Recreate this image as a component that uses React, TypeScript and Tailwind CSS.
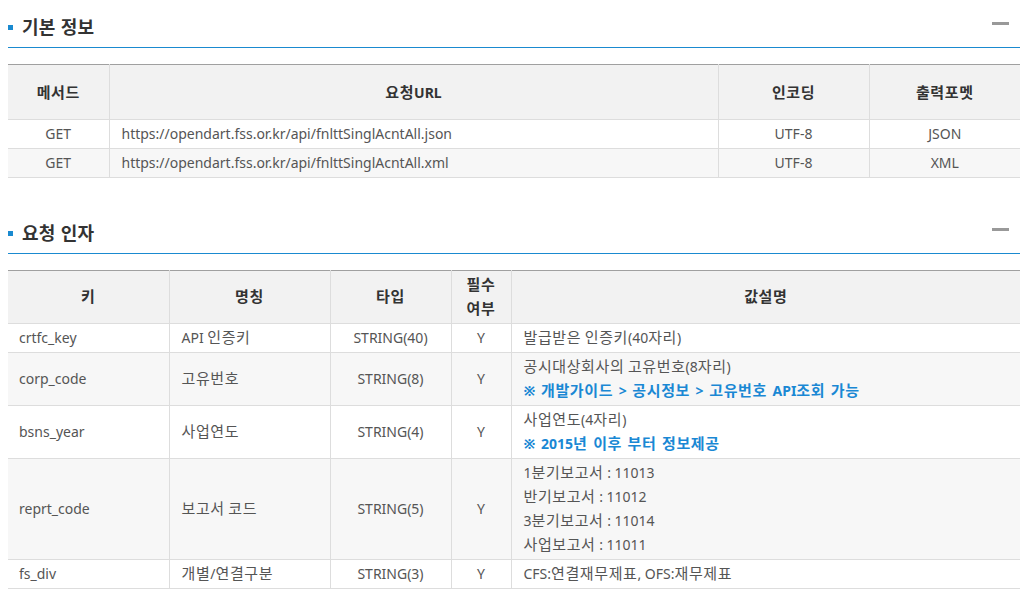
import type { ReactNode } from 'react';

const font = { fontFamily: '"Noto Sans", "Noto Sans CJK KR", sans-serif' };

// Hangul runs get a slightly larger size so they sit as wide as in the original
function K({ children }: { children: string }) {
  const parts = children.split(/([\uAC00-\uD7A3]+)/);
  return (
    <>
      {parts.map((p, i) =>
        i % 2 ? (
          <span key={i} className="text-[15px] leading-none tracking-[0.6px]">
            {p}
          </span>
        ) : (
          p
        ),
      )}
    </>
  );
}

function SectionTitle({ title }: { title: string }) {
  return (
    <div className="flex h-[48px] items-center justify-between border-b border-[#1a8ad0] pt-[7px]">
      <div className="flex items-center gap-[9px]">
        <span className="block size-[5px] bg-[#1a8ad0]" />
        <h2 className="text-[18px] font-bold leading-none tracking-[0.3px] text-[#333]">{title}</h2>
      </div>
      <span className="mr-[11px] mb-[7px] block h-[3px] w-[17px] bg-[#999]" />
    </div>
  );
}

const th = 'border-x border-b border-[#ddd] bg-[#f2f2f2] font-bold text-[#333] first:border-l-0 last:border-r-0';
const td = 'border-x border-b border-[#ddd] py-[2px] leading-6 text-[#555] first:border-l-0 last:border-r-0';

const basicRows = [
  ['GET', 'https://opendart.fss.or.kr/api/fnlttSinglAcntAll.json', 'UTF-8', 'JSON'],
  ['GET', 'https://opendart.fss.or.kr/api/fnlttSinglAcntAll.xml', 'UTF-8', 'XML'],
];

function Note({ children }: { children: string }) {
  return (
    <div className="font-bold text-[#1a88d4] [word-spacing:2px]">
      <K>{children}</K>
    </div>
  );
}

const paramRows: { key: string; name: string; type: string; desc: ReactNode }[] = [
  { key: 'crtfc_key', name: 'API 인증키', type: 'STRING(40)', desc: <K>발급받은 인증키(40자리)</K> },
  {
    key: 'corp_code',
    name: '고유번호',
    type: 'STRING(8)',
    desc: (
      <>
        <div>
          <K>공시대상회사의 고유번호(8자리)</K>
        </div>
        <Note>※ 개발가이드 &gt; 공시정보 &gt; 고유번호 API조회 가능</Note>
      </>
    ),
  },
  {
    key: 'bsns_year',
    name: '사업연도',
    type: 'STRING(4)',
    desc: (
      <>
        <div>
          <K>사업연도(4자리)</K>
        </div>
        <Note>※ 2015년 이후 부터 정보제공</Note>
      </>
    ),
  },
  {
    key: 'reprt_code',
    name: '보고서 코드',
    type: 'STRING(5)',
    desc: (
      <>
        <div>
          <K>1분기보고서 : 11013</K>
        </div>
        <div>
          <K>반기보고서 : 11012</K>
        </div>
        <div>
          <K>3분기보고서 : 11014</K>
        </div>
        <div>
          <K>사업보고서 : 11011</K>
        </div>
      </>
    ),
  },
  { key: 'fs_div', name: '개별/연결구분', type: 'STRING(3)', desc: <K>CFS:연결재무제표, OFS:재무제표</K> },
];

export default function App() {
  return (
    <div className="min-h-[603px] bg-white px-[8px] pr-[12px] text-[14px]" style={font}>
      <SectionTitle title="기본 정보" />
      <table className="mt-[16px] w-full border-collapse border-t border-[#a0a0a0]">
        <colgroup>
          <col className="w-[101px]" />
          <col />
          <col className="w-[151px]" />
          <col className="w-[151px]" />
        </colgroup>
        <thead>
          <tr className="h-[55px]">
            <th className={th}>
              <K>메서드</K>
            </th>
            <th className={th}>
              <K>요청URL</K>
            </th>
            <th className={th}>
              <K>인코딩</K>
            </th>
            <th className={th}>
              <K>출력포멧</K>
            </th>
          </tr>
        </thead>
        <tbody>
          {basicRows.map((r, i) => (
            <tr key={r[3]} className={i % 2 ? 'bg-[#f7f7f7]' : 'bg-white'}>
              <td className={`${td} text-center`}>{r[0]}</td>
              <td className={`${td} pl-[12px]`}>{r[1]}</td>
              <td className={`${td} text-center`}>{r[2]}</td>
              <td className={`${td} text-center`}>{r[3]}</td>
            </tr>
          ))}
        </tbody>
      </table>

      <div className="mt-[28px]">
        <SectionTitle title="요청 인자" />
      </div>
      <table className="mt-[16px] w-full border-collapse border-t border-[#a0a0a0]">
        <colgroup>
          <col className="w-[161px]" />
          <col className="w-[161px]" />
          <col className="w-[121px]" />
          <col className="w-[60px]" />
          <col />
        </colgroup>
        <thead>
          <tr>
            <th className={`${th} py-[2px] leading-6`}>
              <K>키</K>
            </th>
            <th className={`${th} py-[2px] leading-6`}>
              <K>명칭</K>
            </th>
            <th className={`${th} py-[2px] leading-6`}>
              <K>타입</K>
            </th>
            <th className={`${th} py-[2px] leading-6`}>
              <K>필수</K>
              <br />
              <K>여부</K>
            </th>
            <th className={`${th} py-[2px] leading-6`}>
              <K>값설명</K>
            </th>
          </tr>
        </thead>
        <tbody>
          {paramRows.map((r, i) => (
            <tr key={r.key} className={i % 2 ? 'bg-[#f7f7f7]' : 'bg-white'}>
              <td className={`${td} pl-[11px]`}>{r.key}</td>
              <td className={`${td} pl-[12px]`}>
                <K>{r.name}</K>
              </td>
              <td className={`${td} text-center`}>{r.type}</td>
              <td className={`${td} text-center`}>Y</td>
              <td className={`${td} pl-[12px]`}>{r.desc}</td>
            </tr>
          ))}
        </tbody>
      </table>
    </div>
  );
}
